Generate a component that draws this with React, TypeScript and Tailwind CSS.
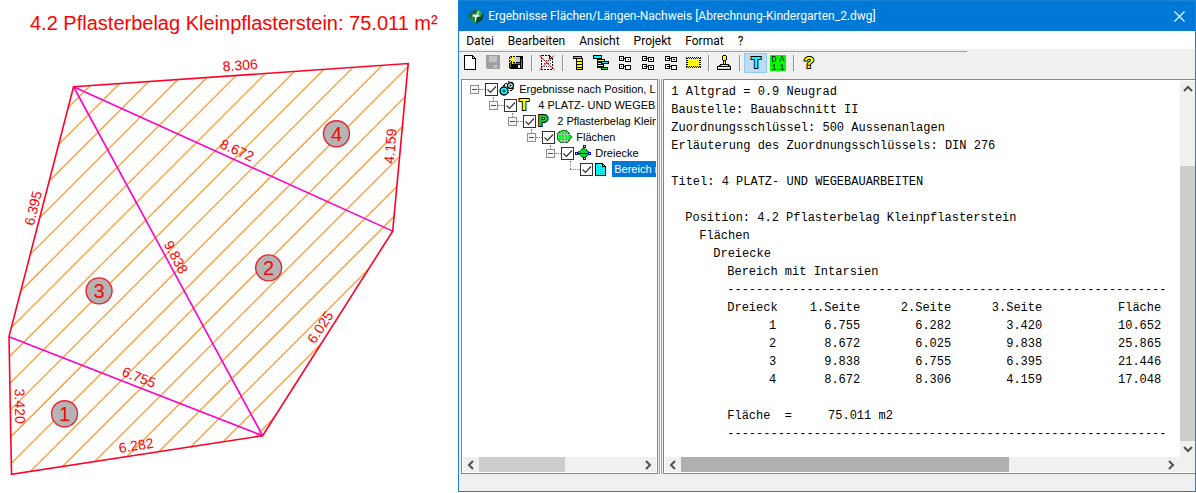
import { useState } from 'react'
import type { ReactNode } from 'react'

type Point = [number, number]

const outline: Point[] = [
  [73.5, 86.7],
  [408, 63.5],
  [392.5, 231],
  [262.5, 435.5],
  [11.5, 474],
  [9, 336.5]
]

const diagonals: [Point, Point][] = [
  [outline[0], outline[2]],
  [outline[0], outline[3]],
  [outline[5], outline[3]]
]

// Length labels: centre point and rotation in degrees
const lengths = [
  { text: '8.306', x: 240, y: 65, angle: -4 },
  { text: '8.672', x: 237, y: 150, angle: 24 },
  { text: '4.159', x: 390, y: 146, angle: -85 },
  { text: '6.395', x: 33, y: 208, angle: -76 },
  { text: '9.838', x: 176, y: 257, angle: 62 },
  { text: '6.025', x: 320, y: 327, angle: -57 },
  { text: '6.755', x: 139, y: 377, angle: 21 },
  { text: '6.282', x: 136, y: 445, angle: -9 },
  { text: '3.420', x: 20, y: 406, angle: 89 }
]

const areas = [
  { id: 1, x: 64.5, y: 413.5 },
  { id: 2, x: 268.5, y: 267.7 },
  { id: 3, x: 99, y: 290.7 },
  { id: 4, x: 336.3, y: 133.7 }
]

const menus = ['Datei', 'Bearbeiten', 'Ansicht', 'Projekt', 'Format', '?']

const triangles = [
  ['1', '6.755', '6.282', '3.420', '10.652'],
  ['2', '8.672', '6.025', '9.838', '25.865'],
  ['3', '9.838', '6.755', '6.395', '21.446'],
  ['4', '8.672', '8.306', '4.159', '17.048']
]

const dashes = '-'.repeat(63)

function Drawing() {
  const points = outline.map((p) => p.join(',')).join(' ')
  const hatch = Array.from({ length: 20 }, (_, i) => 175.8 + i * 27.15)

  return (
    <svg viewBox="0 0 458 492" className="block w-full font-['Liberation_Sans',Arial,sans-serif]" role="img" aria-label="Aufmaß">
      <defs>
        <clipPath id="outline">
          <polygon points={points} />
        </clipPath>
      </defs>
      <text x="30" y="30" fontSize="20" fill="#ff0000">
        4.2 Pflasterbelag Kleinpflasterstein: 75.011 m²
      </text>
      <g clipPath="url(#outline)" stroke="#ff9a33" strokeWidth="1.3">
        {hatch.map((c) => (
          <line key={c} x1={c} y1={0} x2={c - 493} y2={493} />
        ))}
      </g>
      {diagonals.map(([a, b], i) => (
        <line key={i} x1={a[0]} y1={a[1]} x2={b[0]} y2={b[1]} stroke="#ff00c8" strokeWidth="1.6" />
      ))}
      <polygon points={points} fill="none" stroke="#ff0028" strokeWidth="1.6" />
      {lengths.map((l) => (
        <text
          key={l.text}
          transform={`translate(${l.x} ${l.y}) rotate(${l.angle})`}
          y="5"
          fontSize="14"
          textAnchor="middle"
          fill="#ff0000"
        >
          {l.text}
        </text>
      ))}
      {areas.map((a) => (
        <g key={a.id}>
          <circle cx={a.x} cy={a.y} r="13" fill="#b4b4b4" stroke="#ee2030" strokeWidth="1.4" />
          <text x={a.x} y={a.y + 7} fontSize="20" textAnchor="middle" fill="#ff0000">
            {a.id}
          </text>
        </g>
      ))}
    </svg>
  )
}

function Glyph({ children }: { children: ReactNode }) {
  return (
    <svg width="16" height="16" viewBox="0 0 16 16" shapeRendering="crispEdges" className="block shrink-0 overflow-visible" aria-hidden="true">
      {children}
    </svg>
  )
}

function Letter({ char, color, x = 8 }: { char: string; color: string; x?: number }) {
  return (
    <text
      x={x}
      y="13"
      fontSize="17"
      fontWeight="bold"
      textAnchor="middle"
      fill={color}
      stroke="#000"
      strokeWidth="2"
      paintOrder="stroke"
      className="font-['Liberation_Mono',monospace]"
    >
      {char}
    </text>
  )
}

// Two-by-two grid of small boxes, the inner marks differ per button
function Boxes({ marks }: { marks: string }) {
  return (
    <Glyph>
      <path d="M3.5 1.5h4v4h-4zM9.5 2.5h5v4h-5zM3.5 9.5h4v4h-4zM9.5 10.5h5v4h-5zM7 3.5h3M7 11.5h3" fill="#fff" stroke="#000" />
      <path d={marks} stroke="#000" />
    </Glyph>
  )
}

const icons = {
  create: (
    <Glyph>
      <path d="M2.5 .5h8l3 3v11h-11z" fill="#fff" stroke="#000" />
      <path d="M10.5 .5v3h3" fill="none" stroke="#000" />
    </Glyph>
  ),
  save: (
    <Glyph>
      <path d="M1 0h14v14H2l-1-1z" fill="#a0a0a0" />
      <path d="M4 1h8v6H4zM9 10h3v3H9z" fill="#c4c4c4" />
    </Glyph>
  ),
  saveNew: (
    <Glyph>
      <path d="M1 1h14v13H2l-1-1z" fill="#000" />
      <path d="M2 2h1v10H2zM13 4h1v9h-1zM4 8h8v1H4z" fill="#808000" />
      <path d="M5 2h7v5H5z" fill="#c8c8c8" />
      <path d="M10 10h2v3h-2z" fill="#e8e8e8" />
      <path d="M4.5 0v9M0 4.5h9M1 1l7 7M8 1l-7 7" stroke="#ffff00" />
    </Glyph>
  ),
  discard: (
    <Glyph>
      <path d="M2.5 .5h8l3 3v11h-11z" fill="#fff" stroke="#000" strokeDasharray="2 1" />
      <path d="M10.5 .5v3h3" fill="none" stroke="#000" />
      <path d="M5 5.5h7M5 8.5h7M5 11.5h7" stroke="#555" strokeDasharray="1 1" />
      <path d="M.5 .5l15 14.5M15 .5L.5 15" stroke="#e01010" shapeRendering="auto" />
    </Glyph>
  ),
  list: (
    <Glyph>
      <path d="M3.5 1.5h8v2h-8z" fill="#00ffff" stroke="#000" />
      <path d="M6.5 3.5h6v11h-6z" fill="#ffff00" stroke="#000" />
      <path d="M6 6.5h7M6 9.5h7M6 12.5h7" stroke="#000" />
    </Glyph>
  ),
  cascade: (
    <Glyph>
      <path d="M4.5 3v10M4 7.5h6M4 12.5h6" stroke="#000" fill="none" />
      <path d="M.5 .5h8v3h-8z" fill="#00ffff" stroke="#000" />
      <path d="M4.5 4.5h7v2h-7zM4.5 9.5h6v2h-6z" fill="#ffff00" stroke="#000" />
      <path d="M8.5 6.5h7v2h-7z" fill="#00e0ff" stroke="#000" />
      <path d="M8.5 12.5h6v2h-6z" fill="#00e000" stroke="#000" />
    </Glyph>
  ),
  boxesA: <Boxes marks="M5 3.5h1M12 4.5h1M5 11.5h1" />,
  boxesB: <Boxes marks="M5 3.5h2M11 4.5h2M5 11.5h2M11 12.5h2" />,
  boxesC: <Boxes marks="M5 3.5h2M11 4.5h2M5 11.5h2" />,
  hatch: (
    <Glyph>
      <path d="M2 4h13v8H2z" fill="#ffff00" />
      <path d="M1 2.5h15M1 12.5h15M1.5 3v10M15.5 3v10" stroke="#000" strokeDasharray="1 1" />
      <path d="M2 3.5h13M2 11.5h13M2.5 3v8M14.5 3v8" stroke="#000" strokeDasharray="1 1" />
    </Glyph>
  ),
  stamp: (
    <Glyph>
      <circle cx="8.5" cy="3" r="2.5" fill="#ffff00" stroke="#000" />
      <path d="M7.5 5.5h2v4h-2z" fill="#ffff00" stroke="#000" />
      <path d="M4.5 9.5h8l1 2h-10z" fill="#ffff00" stroke="#000" />
      <path d="M1.5 11.5h13v3h-13z" fill="#fff" stroke="#000" />
      <path d="M3 13.5h11" stroke="#b0b000" strokeDasharray="1 1" />
    </Glyph>
  ),
  text: (
    <Glyph>
      <Letter char="T" color="#00ffff" x={9} />
    </Glyph>
  ),
  da11: (
    <Glyph>
      <path d="M0 0h16v16H0z" fill="#00ff00" />
      <g fontSize="9" textAnchor="middle" fill="#000" className="font-['Liberation_Mono',monospace]">
        <text x="4" y="7">D</text>
        <text x="12" y="7">A</text>
        <text x="4" y="15">1</text>
        <text x="12" y="15">1</text>
      </g>
    </Glyph>
  ),
  help: (
    <Glyph>
      <Letter char="?" color="#ffff00" />
    </Glyph>
  ),
  survey: (
    <Glyph>
      <path d="M2 7l8-7M6 14l9-7" stroke="#000" strokeDasharray="2 1" />
      <g shapeRendering="auto">
        <circle cx="5" cy="10" r="4" fill="#00ffff" stroke="#000" strokeWidth="1.3" />
        <circle cx="5" cy="10" r="1" fill="#fff" stroke="#000" />
        <circle cx="11.5" cy="4.5" r="3" fill="#b0ffff" stroke="#000" strokeWidth="1.3" />
        <circle cx="11.5" cy="4.5" r="1" fill="#000" />
      </g>
    </Glyph>
  ),
  title: (
    <Glyph>
      <Letter char="T" color="#ffff00" x={6} />
    </Glyph>
  ),
  position: (
    <Glyph>
      <Letter char="P" color="#00d820" x={6} />
    </Glyph>
  ),
  surface: (
    <Glyph>
      <path d="M1 5l4-3 4-1 2 1 4 5v2l-3 4-7 1-4-4z" fill="#00f020" stroke="#208030" />
      <path d="M2 5.5h12M2 8.5h12M4 11.5h8M5.5 3v10M8.5 2v12M11.5 4v8" stroke="#a8c8a8" />
    </Glyph>
  ),
  triangle: (
    <Glyph>
      <path d="M2 8l7-5 6 5-6 5z" fill="#00e020" stroke="#208030" />
      <path d="M1 8.5h14" stroke="#000" />
      <path d="M.5 7.5h2v2h-2zM8.5 .5h2v2h-2zM13.5 7.5h2v2h-2zM8.5 12.5h2v2h-2z" fill="#fff" stroke="#0000ff" />
    </Glyph>
  ),
  region: (
    <Glyph>
      <path d="M1.5 2.5h7l3 3v9h-10z" fill="#00ffff" stroke="#000" />
      <path d="M4 6.5h6M4 8.5h6M4 10.5h6M4 12.5h6" stroke="#00a0c0" strokeDasharray="1 1" />
      <path d="M8.5 2.5v3h3" fill="none" stroke="#000" />
    </Glyph>
  )
}

type IconName = keyof typeof icons

const toolbar: { icon: IconName; label: string }[][] = [
  [
    { icon: 'create', label: 'Neu' },
    { icon: 'save', label: 'Speichern' },
    { icon: 'saveNew', label: 'Speichern unter' }
  ],
  [{ icon: 'discard', label: 'Verwerfen' }],
  [
    { icon: 'list', label: 'Liste' },
    { icon: 'cascade', label: 'Gliederung' },
    { icon: 'boxesA', label: 'Ebene 1' },
    { icon: 'boxesB', label: 'Ebene 2' },
    { icon: 'boxesC', label: 'Ebene 3' },
    { icon: 'hatch', label: 'Auswahl' }
  ],
  [{ icon: 'stamp', label: 'Stempel' }],
  [
    { icon: 'text', label: 'Textformat' },
    { icon: 'da11', label: 'DA11-Format' }
  ],
  [{ icon: 'help', label: 'Hilfe' }]
]

const tree: { label: string; icon: IconName }[] = [
  { label: 'Ergebnisse nach Position, Länge', icon: 'survey' },
  { label: '4 PLATZ- UND WEGEBAUARBEITEN', icon: 'title' },
  { label: '2 Pflasterbelag Kleinpflasterstein', icon: 'position' },
  { label: 'Flächen', icon: 'surface' },
  { label: 'Dreiecke', icon: 'triangle' },
  { label: 'Bereich mit Intarsien', icon: 'region' }
]

function TreeRow({ label, icon, level, leaf }: { label: string; icon: IconName; level: number; leaf: boolean }) {
  const id = `node-${level}`
  return (
    <li className="flex h-4 items-center" style={{ paddingLeft: level * 19 }}>
      <div className="flex h-4 w-[9px] shrink-0 flex-col items-center">
        {leaf ? (
          <span className="ml-px h-2 border-l border-dotted border-[#808080]" />
        ) : (
          <>
            <span className={level > 0 ? 'h-1 border-l border-dotted border-[#808080]' : 'h-1'} />
            <button
              type="button"
              aria-label={`${label} zuklappen`}
              className="flex h-[9px] w-[9px] shrink-0 items-center justify-center border border-[#919191] bg-[#f6f6f6]"
            >
              <span className="h-px w-[5px] bg-[#3050a8]" />
            </button>
          </>
        )}
      </div>
      <span className={leaf ? '-ml-1 w-[10px] shrink-0 border-t border-dotted border-[#808080]' : 'w-[6px] shrink-0 border-t border-dotted border-[#808080]'} />
      <span className="relative h-[13px] w-[13px] shrink-0">
        <input
          id={id}
          type="checkbox"
          defaultChecked
          className="peer block h-[13px] w-[13px] appearance-none border border-[#333] bg-white"
        />
        <svg viewBox="0 0 13 13" className="pointer-events-none absolute inset-0 hidden peer-checked:block" aria-hidden="true">
          <path d="M2.5 6.5l3 3 5.5-6" fill="none" stroke="#333" strokeWidth="1.2" />
        </svg>
      </span>
      <span className="ml-px shrink-0">{icons[icon]}</span>
      <label
        htmlFor={id}
        className={`ml-0.5 min-w-0 overflow-hidden px-0.5 leading-4 whitespace-nowrap ${leaf ? 'bg-[#0078d7] text-white' : ''}`}
      >
        {label}
      </label>
    </li>
  )
}

const arrows = {
  left: 'M10 4L6 8l4 4',
  right: 'M6 4l4 4-4 4',
  up: 'M4 10l4-4 4 4',
  down: 'M4 6l4 4 4-4'
}

function ArrowButton({ direction, label }: { direction: keyof typeof arrows; label: string }) {
  return (
    <button type="button" aria-label={label} className="flex h-4 w-4 shrink-0 items-center justify-center">
      <svg width="16" height="16" viewBox="0 0 16 16" aria-hidden="true">
        <path d={arrows[direction]} fill="none" stroke="#505050" strokeWidth="2" />
      </svg>
    </button>
  )
}

function ReportLine({ children }: { children?: ReactNode }) {
  return <p className="h-[18px] whitespace-pre">{children}</p>
}

function Report() {
  return (
    <div className="min-w-0 flex-1 overflow-hidden pt-0.5 pl-[6px] font-['Liberation_Mono','Courier_New',monospace] text-xs leading-[18px] text-black">
      <ReportLine>1 Altgrad = 0.9 Neugrad</ReportLine>
      <ReportLine>Baustelle: Bauabschnitt II</ReportLine>
      <ReportLine>Zuordnungsschlüssel: 500 Aussenanlagen</ReportLine>
      <ReportLine>Erläuterung des Zuordnungsschlüssels: DIN 276</ReportLine>
      <ReportLine />
      <ReportLine>Titel: 4 PLATZ- UND WEGEBAUARBEITEN</ReportLine>
      <ReportLine />
      <div className="pl-[14px]">
        <ReportLine>Position: 4.2 Pflasterbelag Kleinpflasterstein</ReportLine>
        <div className="pl-[14px]">
          <ReportLine>Flächen</ReportLine>
          <div className="pl-[14px]">
            <ReportLine>Dreiecke</ReportLine>
            <div className="w-[454px] overflow-hidden pl-[14px]">
              <ReportLine>Bereich mit Intarsien</ReportLine>
              <ReportLine>{dashes}</ReportLine>
              <table className="w-[434px] table-fixed">
                <thead>
                  <tr className="h-[18px] text-right">
                    <th className="w-[49px] p-0 text-left font-normal">Dreieck</th>
                    <th className="w-[84px] p-0 font-normal">1.Seite</th>
                    <th className="w-[91px] p-0 font-normal">2.Seite</th>
                    <th className="w-[91px] p-0 font-normal">3.Seite</th>
                    <th className="p-0 font-normal">Fläche</th>
                  </tr>
                </thead>
                <tbody>
                  {triangles.map((row) => (
                    <tr key={row[0]} className="h-[18px] text-right">
                      {row.map((cell, i) => (
                        <td key={i} className="p-0">{cell}</td>
                      ))}
                    </tr>
                  ))}
                </tbody>
              </table>
              <ReportLine />
              <ReportLine>{'Fläche  =     75.011 m2'}</ReportLine>
              <ReportLine>{dashes}</ReportLine>
            </div>
          </div>
        </div>
      </div>
    </div>
  )
}

export default function App() {
  const [format, setFormat] = useState<IconName>('text')

  return (
    <div className="flex min-h-screen bg-white">
      <div className="min-w-0 flex-[459]">
        <Drawing />
      </div>

      <div className="mb-px flex min-w-0 flex-[737] flex-col border border-[#1883d7] bg-[#f0f0f0]">
        {/* Title bar */}
        <header className="flex h-[30px] shrink-0 items-center bg-[#0078d7] pr-2 pl-2 text-white">
          <svg width="18" height="18" viewBox="0 0 18 18" aria-hidden="true">
            <path d="M1 8l8-6 8 5-2 6-7 4-5-4z" fill="#1f8a45" />
            <path d="M10 9l7-2-2 6-6 4z" fill="#0b4034" />
            <path d="M1 8l8-6-1 5-4 4z" fill="#14603a" />
            <path d="M11 3l4 3-4 2z" fill="#46b45c" />
            <path d="M4 6l5 2 3-5-1 5 4 1-5 1-2 6V10L4 9l3-1z" fill="#e4f8e8" />
          </svg>
          <h1 className="ml-[3px] flex-1 truncate font-['Roboto','Liberation_Sans',sans-serif] text-xs">
            Ergebnisse Flächen/Längen-Nachweis [Abrechnung-Kindergarten_2.dwg]
          </h1>
          <button type="button" aria-label="Schließen" className="p-0.5">
            <svg width="11" height="11" viewBox="0 0 11 11" aria-hidden="true">
              <path d="M.5 .5l10 10M10.5 .5l-10 10" stroke="#fff" strokeWidth="1.1" />
            </svg>
          </button>
        </header>

        <nav className="flex h-[18px] shrink-0 bg-white font-['Roboto','Liberation_Sans',sans-serif] text-xs leading-5 text-black">
          {menus.map((menu) => (
            <button key={menu} type="button" className="h-[18px] px-[7px] leading-5">
              {menu}
            </button>
          ))}
        </nav>

        {/* Toolbar */}
        <div className="mt-0.5 flex h-7 shrink-0 flex-col">
          <div className="h-px w-[69%] bg-[#a0a0a0]" />
          <div className="flex pt-px">
            {toolbar.map((group, i) => (
              <div key={i} className="flex">
                {i > 0 && <span className="mx-[3px] my-0.5 w-0.5 border-r border-white bg-[#909090]" />}
                {group.map((tool) => (
                  <button
                    key={tool.icon}
                    type="button"
                    aria-label={tool.label}
                    onClick={() => (tool.icon === 'text' || tool.icon === 'da11') && setFormat(tool.icon)}
                    className={`flex h-5 w-[23px] items-center border pl-0.5 ${
                      format === tool.icon ? 'border-[#90c8f6] bg-[#c0dcf3]' : 'border-transparent'
                    }`}
                  >
                    {icons[tool.icon]}
                  </button>
                ))}
              </div>
            ))}
          </div>
        </div>

        <main className="mb-[17px] flex min-h-0 flex-1">
          {/* Result tree */}
          <section className="ml-0.5 flex w-[197px] shrink-0 flex-col border border-[#828790] bg-white p-px">
            <ul className="flex-1 overflow-hidden pl-[7px] font-['Liberation_Sans',Arial,sans-serif] text-[11px] text-black">
              {tree.map((node, i) => (
                <TreeRow key={node.label} {...node} level={i} leaf={i === tree.length - 1} />
              ))}
            </ul>
            <div className="flex h-[15px] items-center bg-[#f0f0f0]">
              <ArrowButton direction="left" label="Baum nach links" />
              <div className="flex h-full flex-1">
                <div className="h-full w-[53%] bg-[#cdcdcd]" />
              </div>
              <ArrowButton direction="right" label="Baum nach rechts" />
            </div>
          </section>

          <div className="mx-px w-[3px] shrink-0 border-x border-[#a0a0a0] bg-white" />

          <section className="flex min-w-0 flex-1 flex-col border-y border-l border-[#828790] bg-white py-px pl-px">
            <div className="flex flex-1">
              <Report />
              <div className="flex w-[15px] shrink-0 flex-col items-center bg-[#f0f0f0]">
                <ArrowButton direction="up" label="Nach oben" />
                <div className="flex w-full flex-1 flex-col justify-end">
                  <div className="h-[80%] bg-[#cdcdcd]" />
                </div>
                <ArrowButton direction="down" label="Nach unten" />
              </div>
            </div>
            <div className="flex h-[15px] items-center bg-[#f0f0f0] pr-4">
              <ArrowButton direction="left" label="Nach links" />
              <div className="flex h-full flex-1">
                <div className="h-full w-[68%] bg-[#b0b0b0]" />
              </div>
              <ArrowButton direction="right" label="Nach rechts" />
            </div>
          </section>
        </main>
      </div>
    </div>
  )
}
